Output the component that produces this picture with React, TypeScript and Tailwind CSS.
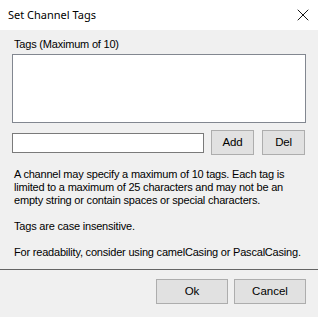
import { X } from "lucide-react";

const btn =
  "h-[25px] bg-[#e1e1e1] border border-[#adadad] text-[11.5px] leading-none text-black flex items-center justify-center";

export default function App() {
  return (
    <div
      className="w-[318px] h-[317px] flex flex-col bg-[#f0f0f0] text-black overflow-hidden"
      style={{ fontFamily: '"Liberation Sans", Arial, sans-serif' }}
    >
      <header className="h-[30px] bg-white flex items-center justify-between pl-[8px] pr-[5px] shrink-0">
        <span className="text-[11px]" style={{ fontFamily: '"Noto Sans", sans-serif' }}>
          Set Channel Tags
        </span>
        <X className="w-[20px] h-[20px]" strokeWidth={1.1} />
      </header>

      <div className="flex flex-col px-[12px] text-[11px] leading-[13px] tracking-[-0.2px]">
        <div className="pt-[8px] pl-[2px]">Tags (Maximum of 10)</div>
        <div className="mt-[3px] h-[69px] w-[294px] bg-white border border-[#828790]" />

        <div className="flex items-center mt-[7px] h-[25px]">
          <div className="w-[192px] h-[20px] bg-white border border-[#7a7a7a]" />
          <button className={`${btn} w-[43px] ml-[7px]`}>Add</button>
          <button className={`${btn} w-[43px] ml-[8px]`}>Del</button>
        </div>

        <div className="pl-[2px] mt-[13px] flex flex-col gap-[13px] whitespace-nowrap">
          <p>
            A channel may specify a maximum of 10 tags. Each tag is
            <br />
            limited to a maximum of 25 characters and may not be an
            <br />
            empty string or contain spaces or special characters.
          </p>
          <p>Tags are case insensitive.</p>
          <p>For readability, consider using camelCasing or PascalCasing.</p>
        </div>
      </div>

      <div className="mt-auto h-px bg-[#646464]" />
      <div className="h-[47px] flex justify-end items-start pt-[9px] pr-[12px] gap-[6px]">
        <button className={`${btn} w-[72px]`}>Ok</button>
        <button className={`${btn} w-[72px]`}>Cancel</button>
      </div>
    </div>
  );
}
